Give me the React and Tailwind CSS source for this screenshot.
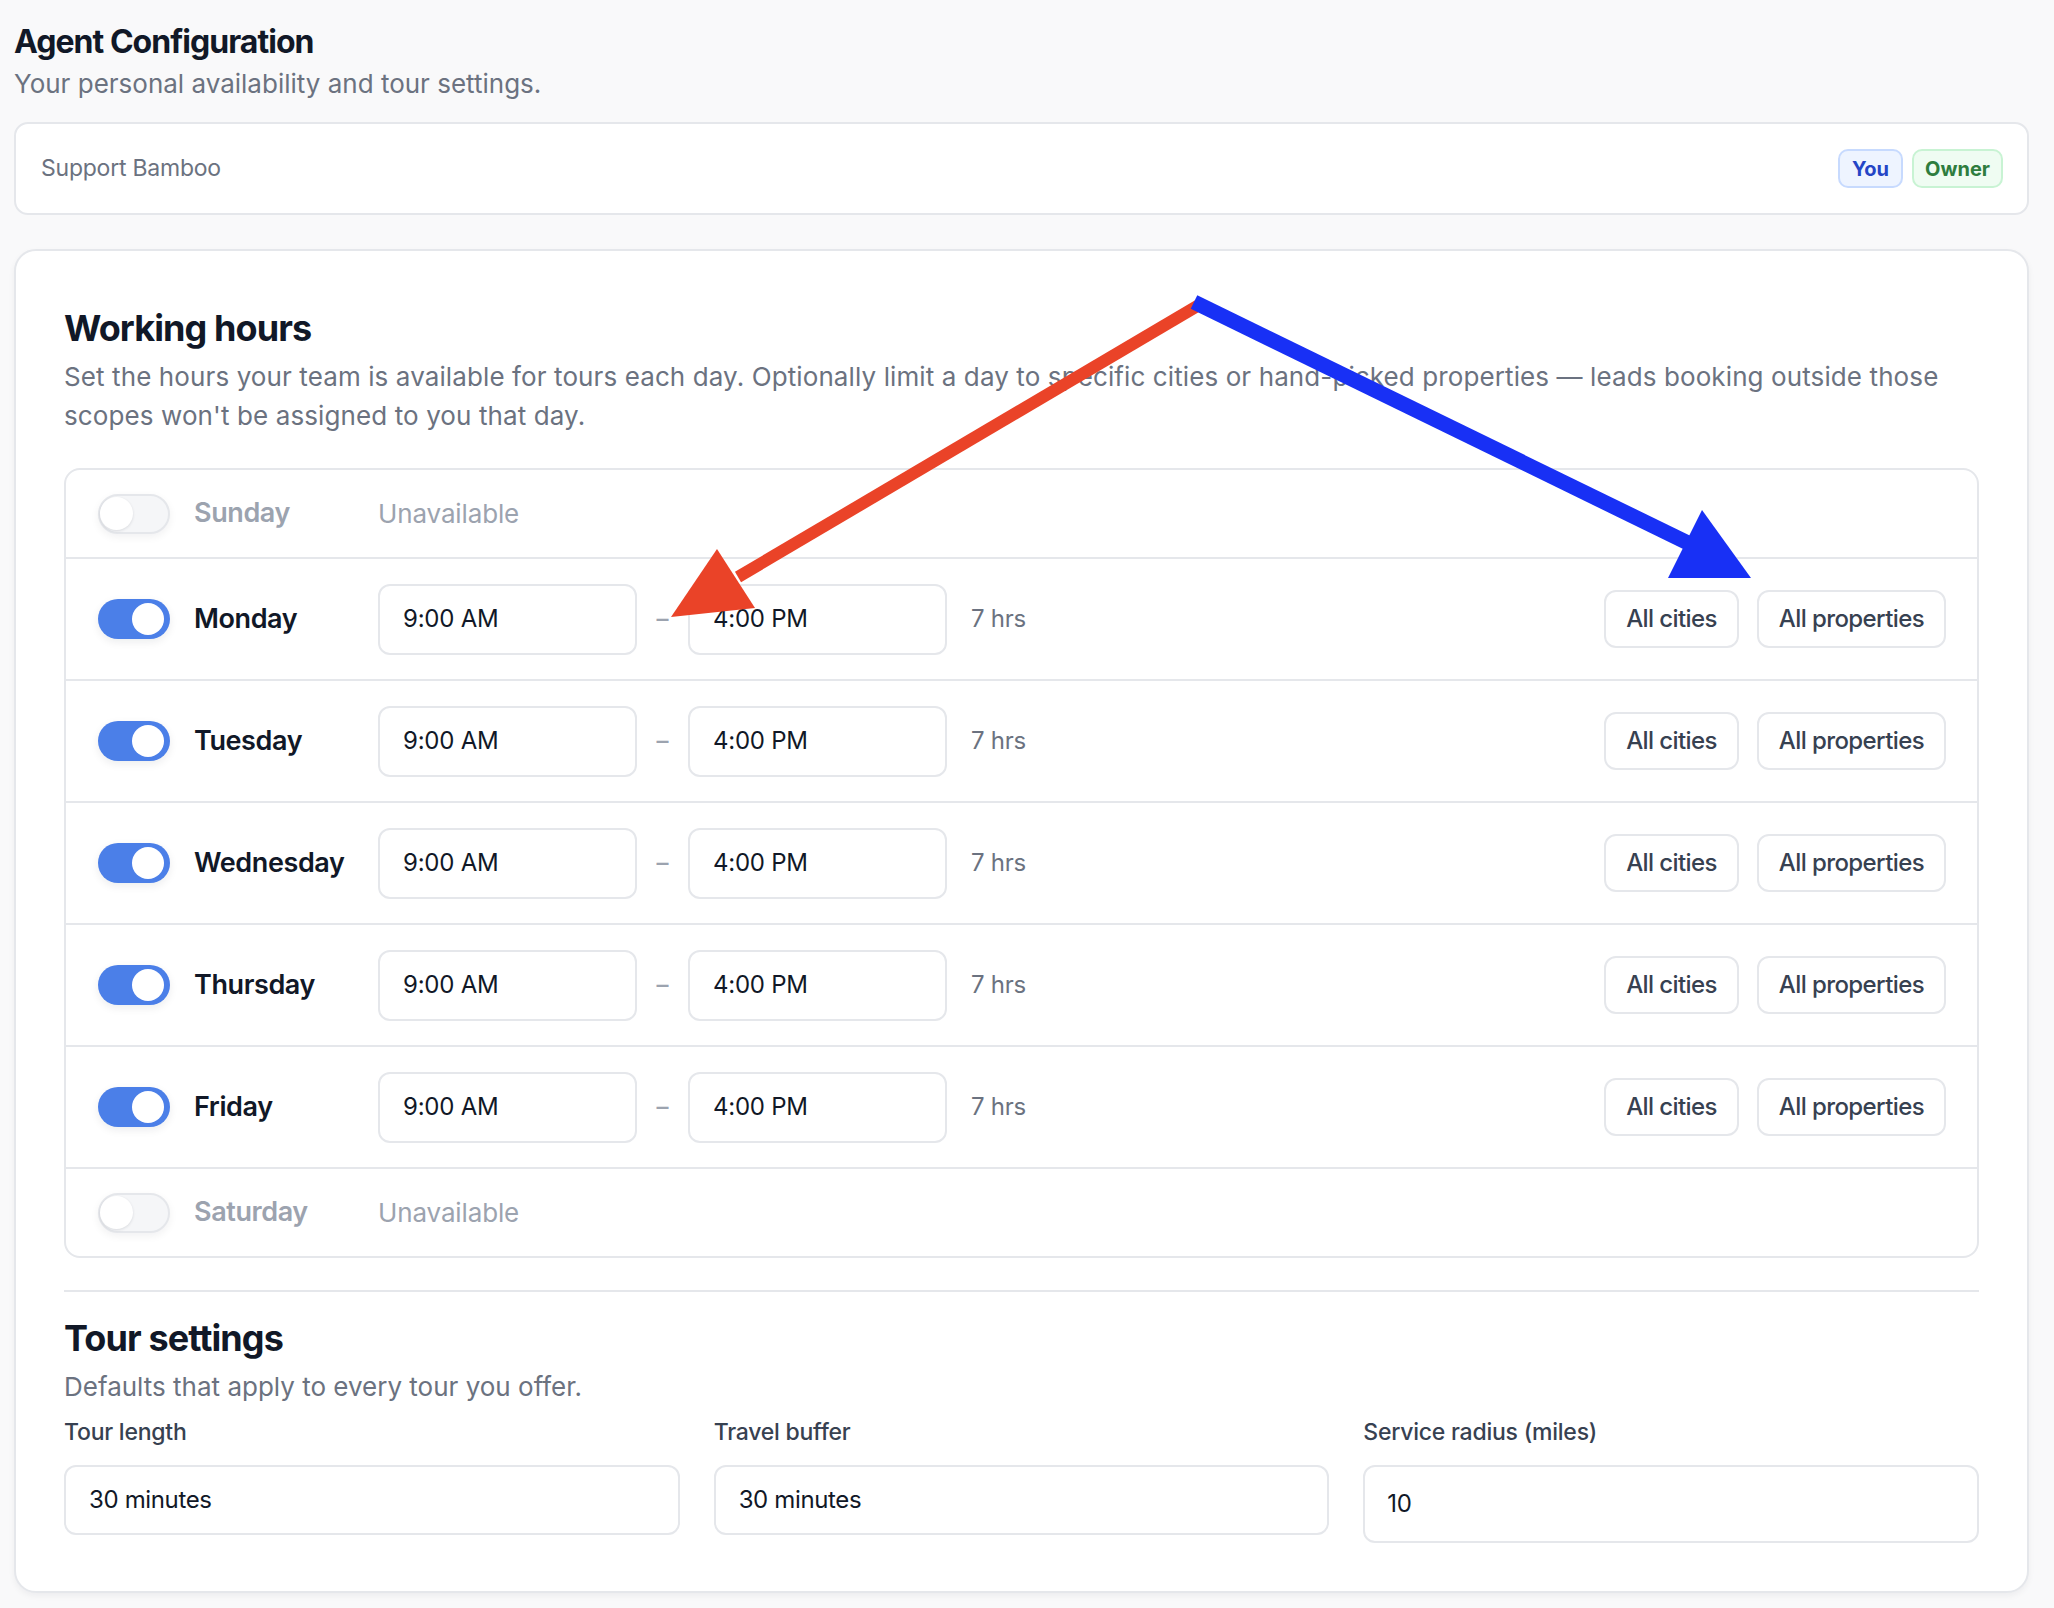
import React from "react";

const days = [
  { name: "Sunday", on: false },
  { name: "Monday", on: true },
  { name: "Tuesday", on: true },
  { name: "Wednesday", on: true },
  { name: "Thursday", on: true },
  { name: "Friday", on: true },
  { name: "Saturday", on: false },
];

function Toggle({ on }) {
  if (on) {
    return (
      <div className="flex h-[40px] w-[72px] flex-none items-center justify-end rounded-full bg-[#4b7fe8] pr-[6px] shadow-[0_3px_8px_rgba(17,24,39,0.08)]">
        <span className="h-[32px] w-[32px] rounded-full bg-white" />
      </div>
    );
  }
  return (
    <div className="flex h-[40px] w-[72px] flex-none items-center rounded-full border-2 border-[#e5e7eb] bg-[#f5f6f8] shadow-[0_3px_8px_rgba(17,24,39,0.06)]">
      <span className="h-[33px] w-[33px] rounded-full bg-white shadow-[0_1px_3px_rgba(17,24,39,0.12)]" />
    </div>
  );
}

function TimeBox({ value }) {
  return (
    <div className="flex h-[71px] w-[259px] flex-none items-center rounded-[12px] border-2 border-[#e5e7eb] bg-white pl-[23px] text-[24px] tracking-[-0.01em] text-[#111827]">
      {value}
    </div>
  );
}

function ScopeButton({ children }) {
  return (
    <button className="flex h-[58px] flex-none items-center rounded-[12px] border-2 border-[#e5e7eb] bg-white px-[20px] text-[24px] font-medium tracking-[-0.025em] text-[#374151]">
      {children}
    </button>
  );
}

function DayRow({ day, first }) {
  const border = first ? "" : "border-t-2 border-[#e5e7eb]";
  if (!day.on) {
    return (
      <div className={`flex h-[87px] box-content items-center pl-[32px] pr-[31px] ${border}`}>
        <Toggle on={false} />
        <span className="ml-[24px] w-[184px] text-[27px] font-semibold tracking-[-0.015em] text-[#9ca3af]">{day.name}</span>
        <span className="text-[26px] tracking-[-0.005em] text-[#9ca3af]">Unavailable</span>
      </div>
    );
  }
  return (
    <div className={`flex h-[120px] box-content items-center pl-[32px] pr-[31px] ${border}`}>
      <Toggle on />
      <span className="ml-[24px] w-[184px] text-[27px] font-semibold tracking-[-0.015em] text-[#111827]">{day.name}</span>
      <TimeBox value="9:00 AM" />
      <span className="w-[51px] flex-none text-center text-[24px] font-medium text-[#9ca3af]">–</span>
      <TimeBox value="4:00 PM" />
      <span className="ml-[24px] text-[24px] tracking-[-0.01em] text-[#6b7280]">7 hrs</span>
      <div className="ml-auto flex gap-[18px]">
        <ScopeButton>All cities</ScopeButton>
        <ScopeButton>All properties</ScopeButton>
      </div>
    </div>
  );
}

function Field({ label, value, tall }) {
  return (
    <div className="flex flex-col">
      <label className="text-[23px] font-medium leading-[32px] tracking-[-0.01em] text-[#374151]">{label}</label>
      <div
        className={`mt-[17px] flex items-center rounded-[12px] border-2 border-[#e5e7eb] bg-white text-[24px] tracking-[-0.015em] text-[#111827] ${
          tall ? "h-[78px] pl-[22px]" : "h-[70px] pl-[23px]"
        }`}
      >
        {value}
      </div>
    </div>
  );
}

export default function App() {
  return (
    <div className="relative min-h-[1608px] w-[2054px] bg-[#f9f9fa] pl-[14px] pr-[25px] pt-[22px] pb-[14px] font-['Inter','Liberation_Sans',sans-serif] antialiased">
      <h1 className="text-[32px] font-bold leading-[40px] tracking-[-0.03em] text-[#111827]">Agent Configuration</h1>
      <p className="mt-[4px] text-[26px] leading-[36px] text-[#6b7280]">Your personal availability and tour settings.</p>

      <div className="mt-[20px] flex h-[93px] items-center justify-between rounded-[14px] border-2 border-[#e5e7eb] bg-white pl-[25px] pr-[24px]">
        <span className="text-[23px] tracking-[-0.01em] text-[#6b7280]">Support Bamboo</span>
        <div className="flex gap-[9px]">
          <span className="flex h-[39px] items-center rounded-[10px] border-2 border-[#c7dafe] bg-[#eef4ff] px-[12px] text-[20px] font-bold text-[#2445c6]">
            You
          </span>
          <span className="flex h-[39px] items-center rounded-[10px] border-2 border-[#c8f3d3] bg-[#effcf2] px-[11px] text-[20px] font-bold text-[#2e7d3e]">
            Owner
          </span>
        </div>
      </div>

      <section className="mt-[34px] rounded-[22px] border-2 border-[#e5e7eb] bg-white px-[48px] pt-[57px] pb-[48px] shadow-[0_3px_6px_rgba(17,24,39,0.05)]">
        <h2 className="text-[36px] font-bold leading-[40px] tracking-[-0.025em] text-[#111827]">Working hours</h2>
        <p className="mt-[9px] text-[26px] leading-[39px] tracking-[0.004em] text-[#6b7280]">
          Set the hours your team is available for tours each day. Optionally limit a day to specific cities or hand-picked
          properties — leads booking outside those scopes won't be assigned to you that day.
        </p>

        <div className="mt-[33px] overflow-hidden rounded-[16px] border-2 border-[#e5e7eb]">
          {days.map((d, i) => (
            <DayRow key={d.name} day={d} first={i === 0} />
          ))}
        </div>

        <div className="mt-[32px] border-t-2 border-[#e5e7eb] pt-[26px]">
          <h2 className="text-[36px] font-bold leading-[40px] tracking-[-0.025em] text-[#111827]">Tour settings</h2>
          <p className="mt-[9px] text-[26px] leading-[39px] text-[#6b7280]">Defaults that apply to every tour you offer.</p>
          <div className="mt-[10px] grid grid-cols-3 items-start gap-x-[34px]">
            <Field label="Tour length" value="30 minutes" />
            <Field label="Travel buffer" value="30 minutes" />
            <Field label="Service radius (miles)" value="10" tall />
          </div>
        </div>
      </section>

      {/* callout arrows drawn over the page */}
      <svg
        className="pointer-events-none absolute left-0 top-0 h-[1608px] w-[2054px]"
        viewBox="0 0 2054 1608"
        fill="none"
      >
        <line x1="1199" y1="305" x2="738" y2="577" stroke="#ea4328" strokeWidth="12" />
        <polygon points="671,617 717,549 755,608" fill="#ea4328" />
        <line x1="1194" y1="302" x2="1688" y2="543" stroke="#1830f5" strokeWidth="15" />
        <polygon points="1751,578 1702,510 1668,578" fill="#1830f5" />
      </svg>
    </div>
  );
}
